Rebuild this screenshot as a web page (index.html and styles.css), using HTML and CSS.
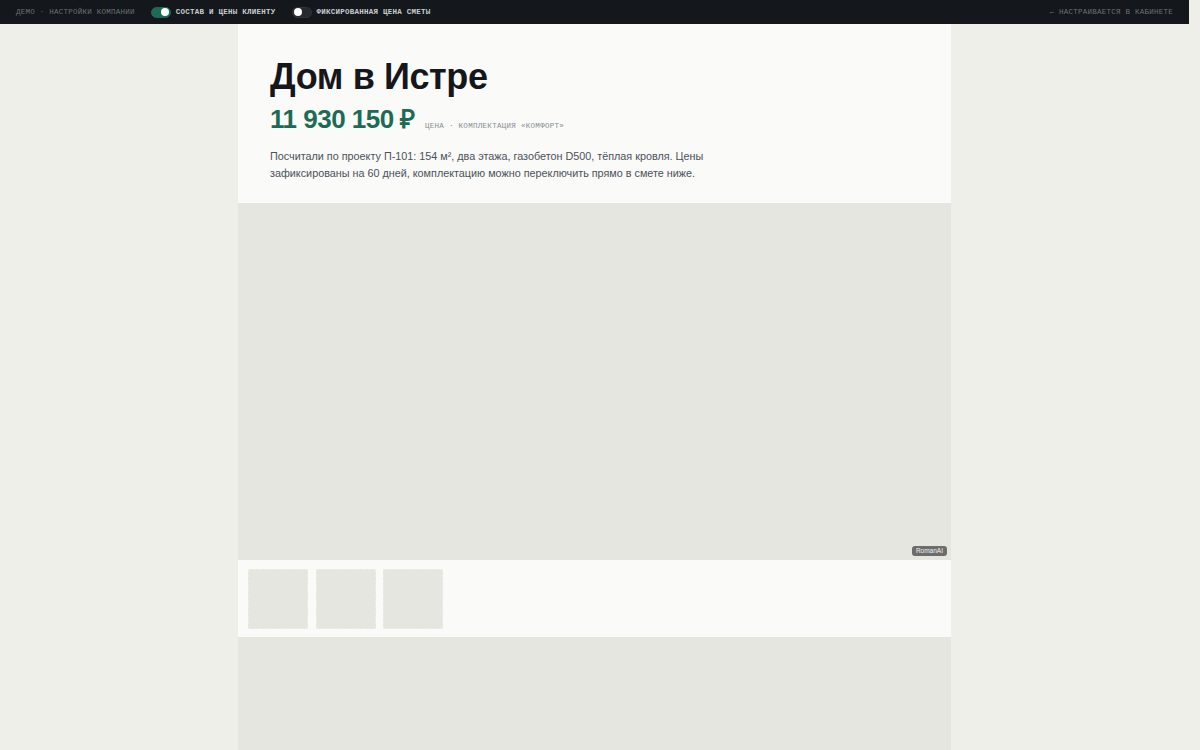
FILE: index.html
```html
<!DOCTYPE html>
<html lang="ru">
<head>
  <meta charset="UTF-8">
  <meta name="viewport" content="width=device-width, initial-scale=1.0">
  <title>Дом в Истре — смета</title>
  <link rel="stylesheet" href="styles.css">
</head>
<body>
  <!-- Demo toolbar: company settings preview -->
  <div class="demoBar">
    <div class="demoLeft">
      <span class="demoLabel">Демо · настройки компании</span>
      <label class="switch on">
        <span class="track"><span class="knob"></span></span>
        <span class="switchText">Состав и цены клиенту</span>
      </label>
      <label class="switch">
        <span class="track"><span class="knob"></span></span>
        <span class="switchText">Фиксированная цена сметы</span>
      </label>
    </div>
    <a class="demoLink" href="#">← настраивается в кабинете</a>
  </div>

  <main class="sheet">
    <section class="intro">
      <h1>Дом в Истре</h1>
      <div class="priceRow">
        <span class="price">11 930 150 ₽</span>
        <span class="priceNote">Цена · комплектация «Комфорт»</span>
      </div>
      <p class="lead">Посчитали по проекту П-101: 154 м², два этажа, газобетон D500, тёплая кровля. Цены зафиксированы на 60 дней, комплектацию можно переключить прямо в смете ниже.</p>
    </section>

    <div class="cover">
      <span class="credit">RomanAI</span>
    </div>

    <div class="thumbs">
      <div class="thumb"></div>
      <div class="thumb"></div>
      <div class="thumb"></div>
    </div>

    <div class="estimate"></div>
  </main>
</body>
</html>
```

FILE: styles.css
```css
* {
  box-sizing: border-box;
}

html, body {
  height: 100%;
}

body {
  margin: 0;
  background: #efefea;
  font-family: 'Liberation Sans', Arial, sans-serif;
  color: #15171a;
  overflow: hidden;
}

/* Top demo toolbar */
.demoBar {
  height: 24px;
  background: #14171b;
  display: flex;
  align-items: center;
  justify-content: space-between;
  padding: 0 16px;
  margin-right: 11px;
  font-family: 'Liberation Mono', 'DejaVu Sans Mono', monospace;
  font-size: 7.5px;
  letter-spacing: 0.25px;
  text-transform: uppercase;
}

.demoLeft {
  display: flex;
  align-items: center;
  gap: 16px;
}

.demoLabel {
  color: #6c7278;
}

.switch {
  display: flex;
  align-items: center;
  gap: 5px;
  cursor: pointer;
}

.track {
  width: 20px;
  height: 11px;
  border-radius: 6px;
  background: #262a2f;
  border: 1px solid #30353a;
  display: flex;
  align-items: center;
  padding: 0 1px;
}

.knob {
  width: 8px;
  height: 8px;
  border-radius: 50%;
  background: #fff;
}

.switch.on .track {
  background: #1e6b55;
  border-color: #1e6b55;
  justify-content: flex-end;
}

.switchText {
  color: #c9cdd1;
  font-weight: bold;
}

.demoLink {
  color: #6c7278;
  text-decoration: none;
}

/* Main sheet column */
.sheet {
  width: 713px;
  margin: 0 0 0 238px;
  background: #fafaf8;
}

.intro {
  padding: 31px 32px 21px;
}

.intro h1 {
  margin: 0;
  font-size: 36px;
  line-height: 44px;
  font-weight: bold;
  letter-spacing: -0.4px;
}

.priceRow {
  display: flex;
  align-items: baseline;
  gap: 10px;
  margin-top: 1px;
}

.price {
  font-size: 26px;
  font-weight: bold;
  color: #1d6b55;
  letter-spacing: -0.5px;
}

.priceNote {
  font-family: 'Liberation Mono', 'DejaVu Sans Mono', monospace;
  font-size: 7.5px;
  letter-spacing: 0.3px;
  text-transform: uppercase;
  color: #868c93;
}

.lead {
  margin: 12px 0 0;
  max-width: 450px;
  font-size: 10.8px;
  line-height: 17px;
  color: #4b5158;
}

.cover {
  height: 357px;
  background: #e6e6e1;
  position: relative;
}

.credit {
  position: absolute;
  right: 4px;
  bottom: 4px;
  padding: 1px 4px;
  border-radius: 3px;
  background: #6c6c6a;
  color: #f2f2f2;
  font-size: 6.5px;
  line-height: 8px;
}

.thumbs {
  display: flex;
  gap: 7.5px;
  padding: 9px 10px 8px;
}

.thumb {
  width: 60px;
  height: 60px;
  background: #e6e6e1;
  border: 1px dashed #ececE8;
}

.estimate {
  height: 400px;
  background: #e6e6e1;
}
```
